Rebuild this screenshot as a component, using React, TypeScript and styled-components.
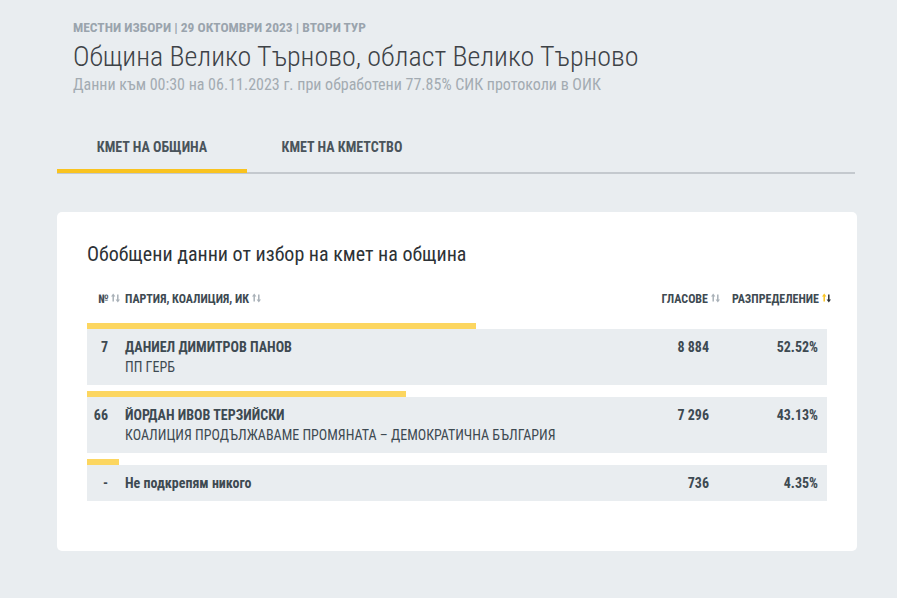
import React from "react";
import styled, { createGlobalStyle } from "styled-components";

const GlobalStyle = createGlobalStyle`
  body {
    margin: 0;
    background: #e9edf0;
    font-family: "Roboto Condensed", "Roboto", "Liberation Sans", sans-serif;
    font-stretch: condensed;
    color: #3e4a52;
  }
`;

const Page = styled.div`
  width: 800px;
  padding: 19px 0 47px 57px;
`;

const Header = styled.header`
  padding-left: 16px;
`;

const Label = styled.div`
  font-size: 13.5px;
  line-height: 16px;
  font-weight: 700;
  color: #9aa4ad;
  text-transform: uppercase;
`;

const Title = styled.h1`
  margin: 5px 0 0;
  font-size: 28px;
  line-height: 34px;
  font-weight: 300;
  color: #3d4247;
`;

const Subtitle = styled.div`
  margin-top: 1px;
  font-size: 16px;
  line-height: 20px;
  color: #a3abb2;
`;

const TabBar = styled.nav`
  display: flex;
  width: 798px;
  margin-top: 30px;
  border-bottom: 2px solid #c4c9ce;
`;

const Tab = styled.div<{ active?: boolean }>`
  width: 190px;
  height: 44px;
  display: flex;
  align-items: center;
  justify-content: center;
  font-size: 14px;
  font-weight: 700;
  color: #4a545b;
  border-bottom: 4px solid ${(p) => (p.active ? "#f9c31f" : "transparent")};
  margin-bottom: -1px;
`;

const Card = styled.section`
  margin-top: 38px;
  background: #ffffff;
  border-radius: 5px;
  padding: 30px 30px 44px;
`;

const CardTitle = styled.h2`
  margin: 0;
  font-size: 20px;
  line-height: 24px;
  font-weight: 400;
  color: #2d3236;
`;

const HeadRow = styled.div`
  display: grid;
  grid-template-columns: 38px 1fr 110px 111px;
  width: 744px;
  margin-top: 23px;
  margin-bottom: 14px;
  font-size: 12px;
  line-height: 20px;
  font-weight: 700;
  color: #3e4a52;
`;

const HeadCell = styled.div<{ right?: boolean }>`
  display: flex;
  align-items: center;
  justify-content: ${(p) => (p.right ? "flex-end" : "flex-start")};
  white-space: nowrap;
`;

const NumHead = styled(HeadCell)`
  padding-left: 11px;
`;

const ArrowIcon = styled.svg`
  margin-left: 3px;
  margin-top: -2px;
  flex: none;
`;

const Result = styled.div`
  margin-bottom: 6px;
`;

const Bar = styled.div`
  height: 6px;
  background: #fcd660;
`;

const Row = styled.div`
  display: grid;
  grid-template-columns: 38px 1fr 100px 109px;
  padding: 8px 9px 8px 0;
  background: #e9edf0;
  font-size: 14px;
  line-height: 20px;
`;

const Num = styled.div`
  text-align: right;
  padding-right: 17px;
  font-weight: 700;
`;

const Name = styled.div`
  font-weight: 700;
  text-transform: uppercase;
`;

const Plain = styled.div`
  font-weight: 700;
`;

const Party = styled.div`
  font-weight: 400;
  text-transform: uppercase;
`;

const Value = styled.div`
  text-align: right;
  font-weight: 700;
`;

const SortArrows: React.FC<{ active?: boolean }> = ({ active }) => {
  const up = active ? "#f9c31f" : "#a9b1b8";
  const down = active ? "#2d3236" : "#a9b1b8";
  return (
    <ArrowIcon width="9" height="10" viewBox="0 0 9 10">
      <path d="M2.2 8.5V2.5" stroke={up} strokeWidth="1.5" />
      <path d="M0 3.4L2.2 0.5L4.4 3.4Z" fill={up} />
      <path d="M6.8 1.5V7.5" stroke={down} strokeWidth="1.5" />
      <path d="M4.6 6.6L6.8 9.5L9 6.6Z" fill={down} />
    </ArrowIcon>
  );
};

interface Candidate {
  num: string;
  name: string;
  party?: string;
  votes: string;
  pct: number;
}

const rows: Candidate[] = [
  { num: "7", name: "Даниел Димитров Панов", party: "ПП ГЕРБ", votes: "8 884", pct: 52.52 },
  {
    num: "66",
    name: "Йордан Ивов Терзийски",
    party: "Коалиция Продължаваме промяната – Демократична България",
    votes: "7 296",
    pct: 43.13,
  },
  { num: "-", name: "Не подкрепям никого", votes: "736", pct: 4.35 },
];

export default function App() {
  return (
    <>
      <GlobalStyle />
      <Page>
        <Header>
          <Label>Местни избори | 29 октомври 2023 | втори тур</Label>
          <Title>Община Велико Търново, област Велико Търново</Title>
          <Subtitle>
            Данни към 00:30 на 06.11.2023 г. при обработени 77.85% СИК протоколи в ОИК
          </Subtitle>
        </Header>
        <TabBar>
          <Tab active>КМЕТ НА ОБЩИНА</Tab>
          <Tab>КМЕТ НА КМЕТСТВО</Tab>
        </TabBar>
        <Card>
          <CardTitle>Обобщени данни от избор на кмет на община</CardTitle>
          <HeadRow>
            <NumHead>
              №<SortArrows />
            </NumHead>
            <HeadCell>
              ПАРТИЯ, КОАЛИЦИЯ, ИК<SortArrows />
            </HeadCell>
            <HeadCell right>
              ГЛАСОВЕ<SortArrows />
            </HeadCell>
            <HeadCell right>
              РАЗПРЕДЕЛЕНИЕ<SortArrows active />
            </HeadCell>
          </HeadRow>
          {rows.map((r) => (
            <Result key={r.num}>
              <Bar style={{ width: `${r.pct}%` }} />
              <Row>
                <Num>{r.num}</Num>
                <div>
                  {r.party ? <Name>{r.name}</Name> : <Plain>{r.name}</Plain>}
                  {r.party && <Party>{r.party}</Party>}
                </div>
                <Value>{r.votes}</Value>
                <Value>{r.pct.toFixed(2)}%</Value>
              </Row>
            </Result>
          ))}
        </Card>
      </Page>
    </>
  );
}
